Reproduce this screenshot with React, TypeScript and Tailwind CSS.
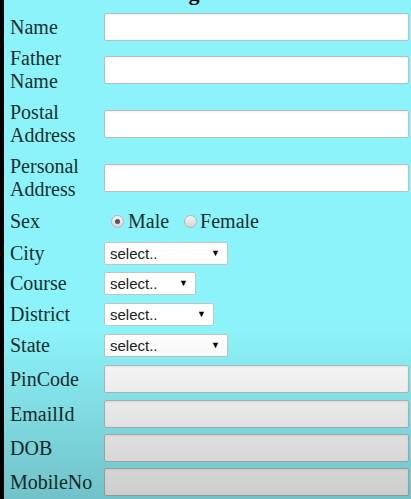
import React from "react";

/* Student registration form — old-school table look on cyan */

function Row({ label, mt, children }: { label: React.ReactNode; mt: string; children: React.ReactNode }) {
  return (
    <div className={`flex items-center ${mt}`}>
      <div className="w-[94px] shrink-0">{label}</div>
      {children}
    </div>
  );
}

function TextBox() {
  return (
    <div className="h-[28px] w-[305px] rounded-[2px] border border-[#bcbcbc] bg-white shadow-[inset_0_1px_2px_rgba(0,0,0,0.08)]" />
  );
}

function SelectBox({ width }: { width: string }) {
  return (
    <div
      className={`flex h-[23px] ${width} items-center justify-between rounded-[2px] border border-[#c4c4c4] bg-white pl-[5px] pr-[7px] font-['Liberation_Sans',Arial,sans-serif] text-[15px] leading-none text-[#222]`}
    >
      <span>select..</span>
      <span className="text-[9px] text-black">▼</span>
    </div>
  );
}

function Radio({ checked }: { checked?: boolean }) {
  return (
    <span className="flex h-[13px] w-[13px] items-center justify-center rounded-full border border-[#b5b5b5] bg-gradient-to-b from-[#f4f4f4] to-[#d6d6d6]">
      {checked && <span className="h-[5px] w-[5px] rounded-full bg-[#555]" />}
    </span>
  );
}

export default function App() {
  return (
    <div className="relative h-[499px] w-[411px] overflow-hidden border-l-4 border-black bg-[#8df3fa] pl-[6px] font-['Liberation_Serif','Times_New_Roman',serif] text-[20px] leading-[23px] text-[#173030]">
      <h2 className="-mt-[18px] text-center text-[22px] font-bold leading-[22px] text-black">
        Student Registration Form
      </h2>

      <Row label="Name" mt="mt-[9px]">
        <TextBox />
      </Row>
      <Row label={<>Father<br />Name</>} mt="mt-[6px]">
        <TextBox />
      </Row>
      <Row label={<>Postal<br />Address</>} mt="mt-[8px]">
        <TextBox />
      </Row>
      <Row label={<>Personal<br />Address</>} mt="mt-[8px]">
        <TextBox />
      </Row>
      <Row label="Sex" mt="mt-[9px]">
        <div className="flex items-center pl-[7px]">
          <Radio checked />
          <span className="ml-[4px]">Male</span>
          <span className="ml-[15px]"><Radio /></span>
          <span className="ml-[3px]">Female</span>
        </div>
      </Row>
      <Row label="City" mt="mt-[9px]">
        <SelectBox width="w-[124px]" />
      </Row>
      <Row label="Course" mt="mt-[7px]">
        <SelectBox width="w-[92px]" />
      </Row>
      <Row label="District" mt="mt-[8px]">
        <SelectBox width="w-[110px]" />
      </Row>
      <Row label="State" mt="mt-[8px]">
        <SelectBox width="w-[124px]" />
      </Row>
      <Row label="PinCode" mt="mt-[8px]">
        <TextBox />
      </Row>
      <Row label="EmailId" mt="mt-[7px]">
        <TextBox />
      </Row>
      <Row label="DOB" mt="mt-[6px]">
        <TextBox />
      </Row>
      <Row label="MobileNo" mt="mt-[6px]">
        <TextBox />
      </Row>

      {/* video-player shade over the lower part */}
      <div className="pointer-events-none absolute inset-x-0 bottom-0 h-[170px] bg-gradient-to-b from-transparent to-black/20" />
    </div>
  );
}
